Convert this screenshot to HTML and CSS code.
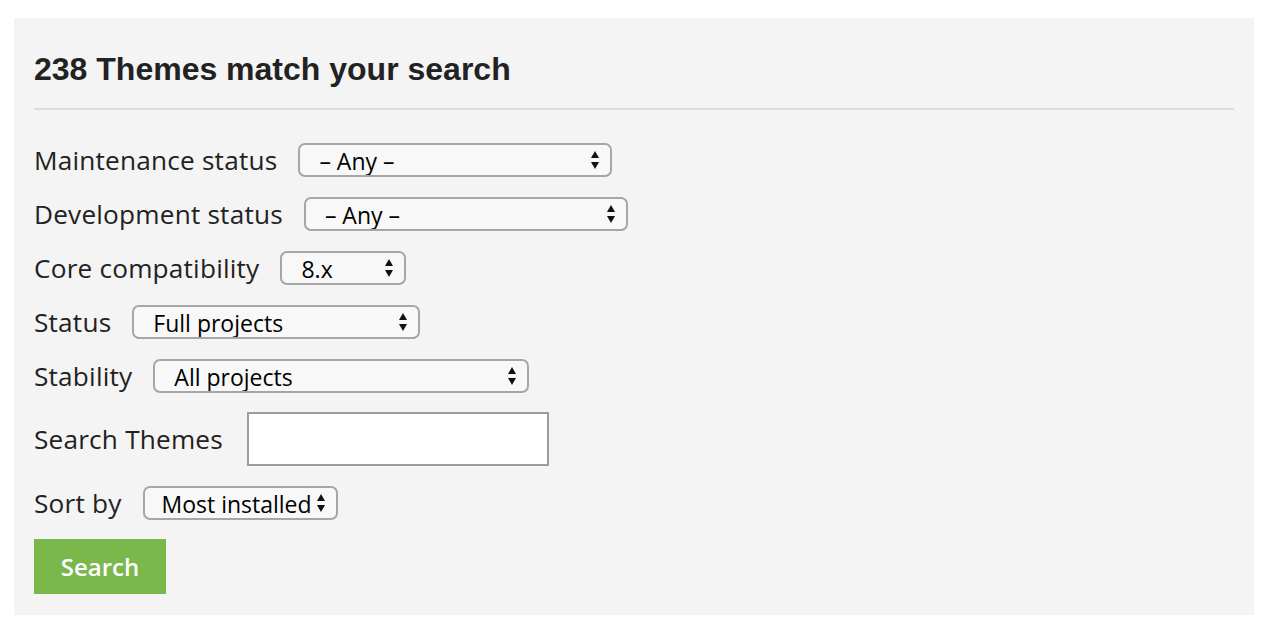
FILE: index.html
```html
<!DOCTYPE html>
<html lang="en">
<head>
<meta charset="utf-8">
<title>Themes search</title>
<link rel="stylesheet" href="styles.css">
</head>
<body>
<form class="panel">
  <h2 class="title">238 Themes match your search</h2>
  <hr class="rule">
  <div class="row">
    <label class="label" for="f1">Maintenance status</label>
    <span class="select-wrap"><select id="f1" class="select w-maint"><option>– Any –</option></select></span>
  </div>
  <div class="row">
    <label class="label" for="f2">Development status</label>
    <span class="select-wrap"><select id="f2" class="select w-dev"><option>– Any –</option></select></span>
  </div>
  <div class="row">
    <label class="label" for="f3">Core compatibility</label>
    <span class="select-wrap"><select id="f3" class="select w-core"><option>8.x</option></select></span>
  </div>
  <div class="row">
    <label class="label" for="f4">Status</label>
    <span class="select-wrap"><select id="f4" class="select w-status"><option>Full projects</option></select></span>
  </div>
  <div class="row">
    <label class="label" for="f5">Stability</label>
    <span class="select-wrap"><select id="f5" class="select w-stab"><option>All projects</option></select></span>
  </div>
  <div class="row row-input">
    <label class="label" for="f6">Search Themes</label>
    <input id="f6" class="text-input" type="text">
  </div>
  <div class="row">
    <label class="label" for="f7">Sort by</label>
    <span class="select-wrap"><select id="f7" class="select w-sort"><option>Most installed</option></select></span>
  </div>
  <button type="button" class="btn">Search</button>
</form>
</body>
</html>
```
FILE: styles.css
```css
html, body {
  margin: 0;
  padding: 0;
  background: #ffffff;
}

.panel {
  box-sizing: border-box;
  width: 1240px;
  margin: 18px 0 8px 14px;
  padding: 20px 20px 21px;
  background: #f4f4f4;
  display: flex;
  flex-direction: column;
  align-items: flex-start;
}

.title {
  margin: 14px 0 22px;
  font-family: "Liberation Sans", Arial, sans-serif;
  font-weight: 700;
  font-size: 32px;
  line-height: 34px;
  color: #222222;
}

.rule {
  align-self: stretch;
  margin: 0 0 33px;
  height: 2px;
  border: 0;
  background: #dcdcdc;
}

.row {
  display: flex;
  align-items: center;
  gap: 21px;
  margin-bottom: 20px;
}

.row-input {
  gap: 24px;
  margin-top: -1px;
}

.label {
  font-family: "Open Sans", sans-serif;
  font-size: 26.2px;
  letter-spacing: 0.2px;
  color: #222222;
  line-height: 32px;
}

.select-wrap {
  position: relative;
  display: inline-flex;
}

.select-wrap::before,
.select-wrap::after {
  content: "";
  position: absolute;
  right: 13px;
  width: 0;
  height: 0;
  border-left: 4px solid transparent;
  border-right: 4px solid transparent;
  pointer-events: none;
}

.select-wrap::before {
  top: 8px;
  border-bottom: 7px solid #111111;
}

.select-wrap::after {
  bottom: 8px;
  border-top: 7px solid #111111;
}

.select {
  -webkit-appearance: none;
  appearance: none;
  box-sizing: border-box;
  height: 34px;
  margin: 0;
  padding: 0 30px 0 19px;
  border: 2px solid #a6a6a6;
  border-radius: 7px;
  background: #f8f8f8;
  font-family: "Open Sans", sans-serif;
  font-size: 23px;
  color: #000000;
}

.w-maint { width: 314px; }
.w-dev { width: 324px; }
.w-core { width: 126px; }
.w-status { width: 288px; }
.w-stab { width: 376px; }
.w-sort { width: 195px; padding-left: 17px; padding-right: 20px; }

.text-input {
  box-sizing: border-box;
  width: 302px;
  height: 54px;
  margin: 0;
  border: 2px solid #9d9d95;
  border-radius: 0;
  background: #ffffff;
}

.btn {
  box-sizing: border-box;
  width: 132px;
  height: 55px;
  margin: -1px 0 0;
  padding: 0;
  border: 0;
  background: #7ab84c;
  color: #ffffff;
  font-family: "Open Sans", sans-serif;
  font-weight: 600;
  font-size: 24px;
}
```
